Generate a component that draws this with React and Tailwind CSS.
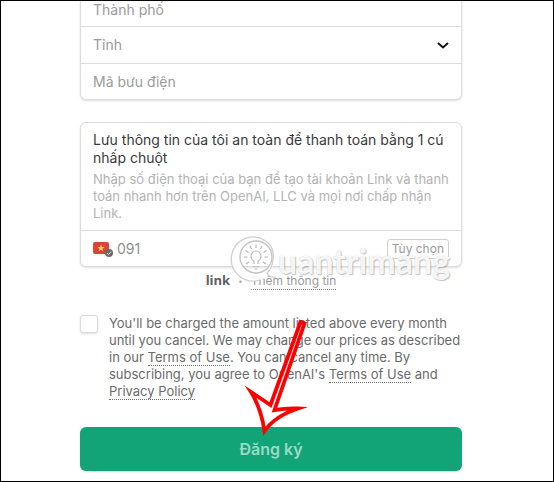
import React from 'react';

const provinces = ["Hà Nội", "Đà Nẵng", "Hồ Chí Minh"];

const FlagIcon = () => (
  <svg className="w-5 h-4 shrink-0" viewBox="0 0 20 16" aria-hidden="true">
    <rect x="0" y="1" width="16" height="12" rx="2" fill="#dc4437" />
    <path d="M8 3.4l.95 2.5 2.65.1-2.1 1.65.75 2.6L8 8.75l-2.25 1.5.75-2.6L4.4 6l2.65-.1z" fill="#fcd34d" />
    <circle cx="16" cy="12" r="4" fill="#6b6b6b" />
    <path d="M14 12.2l1.5 1.4 2.6-3" fill="none" stroke="#dddddd" strokeWidth="1" />
  </svg>
);

const Watermark = () => (
  <div className="pointer-events-none absolute left-[150px] top-[113px] flex items-center" aria-hidden="true">
    <svg className="w-[52px] h-[52px] shrink-0" viewBox="0 0 52 52" fill="none">
      <path
        fillRule="evenodd"
        d="M35 5.500A22 22 0 1 0 30 45Q37 44 37 39Q46 33 42.500 20Q41 11 35 5.500ZM26 6a16 16 0 1 1 0 32a16 16 0 1 1 0-32Z"
        fill="#ffffff"
        fillOpacity="0.9"
      />
      <path d="M35 5.500A22 22 0 1 0 30 45M35 5.500Q45 12 43 25Q42 34 37 38Q39 43 46 42" stroke="#cfcfcf" strokeWidth="1.300" />
      <circle cx="26" cy="22" r="16" stroke="#c2c2c2" strokeWidth="1.300" />
      <path d="M24 29v-3c-2-1-3-3-3-5a5 5 0 0 1 10 0c0 2-1 4-3 5v3M23 31.500h6M24.500 34h3" stroke="#bcbcbc" strokeWidth="1.200" />
      <path d="M26 9.500v3.500M20 11l1.500 3M32 11l-1.500 3M15.500 15.500l3 2M36.500 15.500l-3 2M14 22h3.500M38 22h-3.500M16 29l3-2M36 29l-3-2" stroke="#b4b4b4" strokeWidth="1.200" />
    </svg>
    <span className="-ml-1 font-['Lato','Liberation_Sans',sans-serif] text-[34px] leading-9 font-bold text-white/90 [text-shadow:0_0_1px_rgba(0,0,0,0.25),1px_1px_1px_rgba(0,0,0,0.22)]">
      uantrimang
    </span>
  </div>
);

const Arrow = () => (
  <svg className="pointer-events-none absolute left-[165px] -top-[109px] w-[62px] h-[120px]" viewBox="0 0 62 120" aria-hidden="true">
    <path
      d="M55.500 4L25.500 87Q18 82 6 74Q16 90 19.500 113Q30 98 53 90.500Q42 90 29.500 92L59.500 5.500Z"
      fill="#ffffff"
      stroke="#ff0000"
      strokeWidth="3.800"
      strokeMiterlimit="8"
    />
  </svg>
);

const linkStyle = "border-b border-dotted border-[#707070]";

const AddressForm = () => (
  <div className="flex flex-col rounded-b-md border border-t-0 border-[#dcdcdc] bg-white shadow-sm divide-y divide-[#dcdcdc]">
    <input
      aria-label="Thành phố"
      placeholder="Thành phố"
      className="h-[26px] w-full px-3 pb-2 text-sm outline-none placeholder:text-[#9b9b9b]"
    />
    <div className="relative">
      <select
        aria-label="Tỉnh"
        defaultValue=""
        className="block h-9 w-full appearance-none bg-transparent px-3 text-sm text-[#9b9b9b] outline-none"
      >
        <option value="">Tỉnh</option>
        {provinces.map((name) => (
          <option key={name}>{name}</option>
        ))}
      </select>
      <svg className="pointer-events-none absolute right-3 top-3 w-3 h-3" viewBox="0 0 12 12" fill="none">
        <path d="M1 4l5 4.500L11 4" stroke="#111111" strokeWidth="2" />
      </svg>
    </div>
    <input
      aria-label="Mã bưu điện"
      placeholder="Mã bưu điện"
      className="h-[35px] w-full rounded-b-md px-3 text-sm outline-none placeholder:text-[#9b9b9b]"
    />
  </div>
);

const LinkCard = () => (
  <div className="relative mt-[22px]">
    <div className="rounded-md border border-[#dcdcdc] bg-white shadow-sm">
      <div className="border-b border-[#dcdcdc] px-3 py-2">
        <h2 className="text-sm leading-[18px] text-[#3a3a3a]">
          Lưu thông tin của tôi an toàn để thanh toán bằng 1 cú nhấp chuột
        </h2>
        <p className="mt-1 text-[13px] leading-[17px] text-[#b3b3b3]">
          Nhập số điện thoại của bạn để tạo tài khoản Link và thanh toán nhanh hơn trên OpenAI, LLC và mọi nơi chấp nhận Link.
        </p>
      </div>
      <div className="flex h-[35px] items-center px-3">
        <FlagIcon />
        <input
          type="tel"
          aria-label="Số điện thoại"
          placeholder="091"
          className="ml-1 min-w-0 flex-1 text-sm outline-none placeholder:text-[#8f8f8f]"
        />
        <button type="button" className="h-5 rounded-[3px] border border-[#d0d0d0] px-1 text-xs text-[#9b9b9b]">
          Tùy chọn
        </button>
      </div>
    </div>
    <div className="mt-1 flex h-5 items-center justify-center text-xs text-[#9b9b9b]">
      <span className="font-['Open_Sans',sans-serif] text-[13px] font-bold text-[#606060]">link</span>
      <span className="mx-2 text-[8px] text-[#b0b0b0]">•</span>
      <a href="#more" className="border-b border-dotted border-[#8a8a8a] leading-4">Thêm thông tin</a>
    </div>
    <Watermark />
  </div>
);

export default function App() {
  return (
    <div className="overflow-hidden border border-black bg-white pr-3 pb-[10px] font-['Inter','Liberation_Sans',sans-serif]">
      <form className="mx-auto w-full max-w-[382px]" onSubmit={(e) => e.preventDefault()}>
        <AddressForm />
        <LinkCard />

        <div className="mt-6 flex items-start gap-[11px]">
          <input
            id="agree"
            type="checkbox"
            className="h-[18px] w-[18px] shrink-0 appearance-none rounded-[3px] border border-[#dadada] bg-white shadow-sm"
          />
          <label htmlFor="agree" className="text-[13px] leading-[17px] text-[#6b6b6b]">
            You'll be charged the amount listed above every month until you cancel. We may change our prices as described in our{' '}
            <a href="#terms" className={linkStyle}>Terms of Use</a>. You can cancel any time. By subscribing, you agree to OpenAI's{' '}
            <a href="#terms" className={linkStyle}>Terms of Use</a> and{' '}
            <a href="#privacy" className={linkStyle}>Privacy Policy</a>
          </label>
        </div>

        <div className="relative mt-[27px]">
          <button type="submit" className="block h-11 w-full rounded-md bg-[#12a376] text-base font-semibold text-[#9adbc6] shadow-sm">
            Đăng ký
          </button>
          <Arrow />
        </div>
      </form>
    </div>
  );
}
